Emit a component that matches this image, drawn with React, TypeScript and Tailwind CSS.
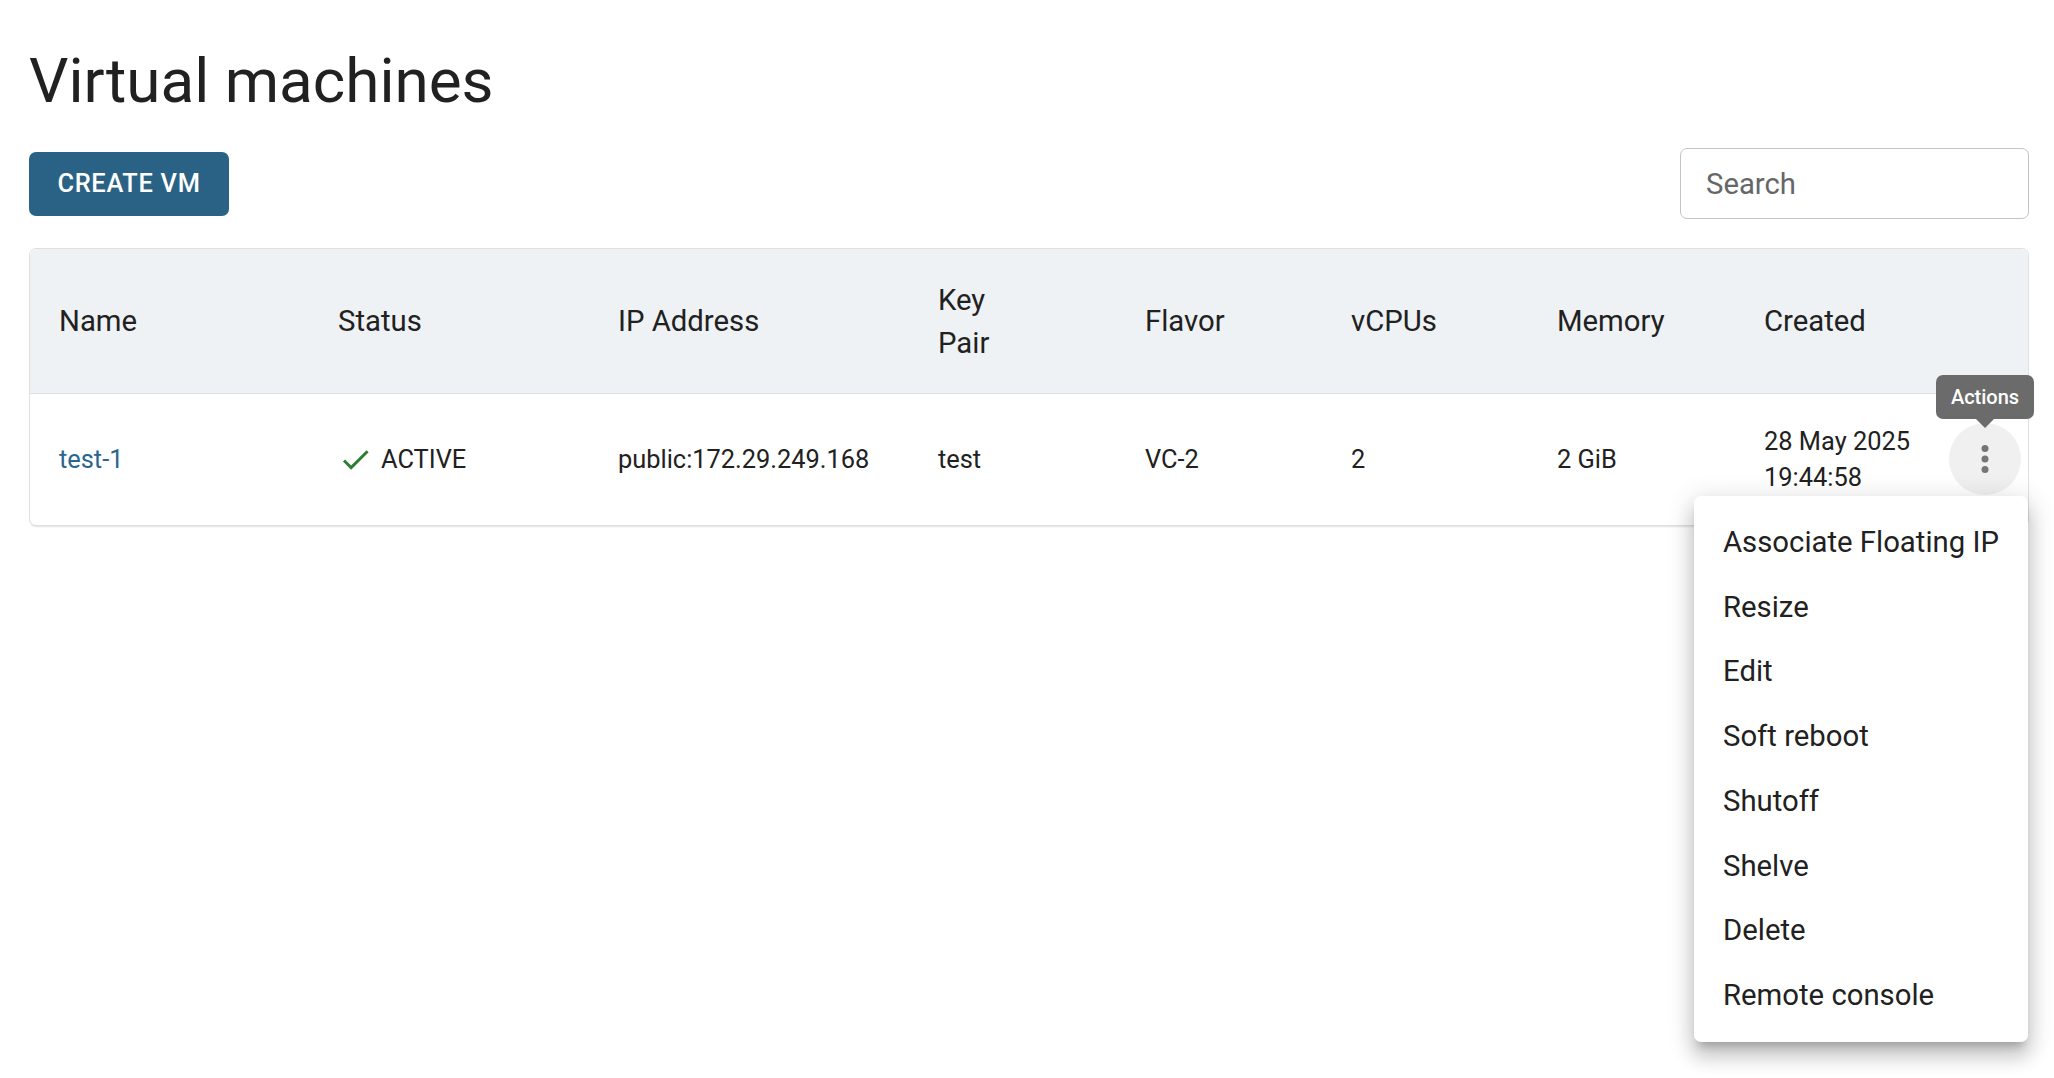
import React from "react";

const headers = ["Name", "Status", "IP Address", "Key Pair", "Flavor", "vCPUs", "Memory", "Created"];
const menuItems = [
  "Associate Floating IP",
  "Resize",
  "Edit",
  "Soft reboot",
  "Shutoff",
  "Shelve",
  "Delete",
  "Remote console",
];

const gridCols =
  "grid grid-cols-[279px_280px_320px_207px_206px_206px_207px_206px_87px]";

export default function App() {
  return (
    <div className="min-h-screen bg-white pl-[29px] pr-[25px] pt-[42px] font-['Roboto',sans-serif] text-[#212121]">
      <h1 className="text-[62px] leading-[77px] font-normal">Virtual machines</h1>

      <div className="mt-[29px] flex h-[71px] items-center justify-between">
        <button className="ml-0 flex h-[64px] w-[200px] items-center justify-center rounded-[7px] bg-[#2a6286] text-[25.4px] font-medium uppercase tracking-[0.7px] text-white">
          Create VM
        </button>
        <div className="flex h-[71px] w-[349px] items-center rounded-[7px] border border-[#c4c4c4] pl-[25px] pt-[2px]">
          <input
            placeholder="Search"
            className="w-full bg-transparent text-[29.3px] outline-none placeholder:text-[#666666]"
          />
        </div>
      </div>

      <div className="mt-[29px] rounded-[7px] border border-[#e0e0e0] bg-white shadow-[0_2px_2px_-1px_rgba(0,0,0,0.12)]">
        <div className={`${gridCols} rounded-t-[7px] border-b border-[#e0e0e0] bg-[#eef2f5]`}>
          {headers.map((h) => (
            <div key={h} className="flex items-center px-[29px] pt-[29.5px] pb-[27px] text-[29.3px] leading-[43.5px]">
              {h === "Key Pair" ? <span className="w-[80px]">Key Pair</span> : h}
            </div>
          ))}
          <div />
        </div>

        <div className={`${gridCols} text-[25.4px] leading-[36.5px]`}>
          <div className="flex items-center px-[29px] py-[29px]">
            <a className="text-[#2a6590]">test-1</a>
          </div>
          <div className="flex items-center gap-[8px] px-[29px] py-[29px]">
            <svg viewBox="0 0 24 24" className="h-[35px] w-[35px] shrink-0" fill="#2e7d32">
              <path d="M9 16.17 4.83 12l-1.42 1.41L9 19 21 7l-1.41-1.41z" />
            </svg>
            <span>ACTIVE</span>
          </div>
          <div className="flex items-center px-[29px] py-[29px]">public:172.29.249.168</div>
          <div className="flex items-center px-[29px] py-[29px]">test</div>
          <div className="flex items-center px-[29px] py-[29px]">VC-2</div>
          <div className="flex items-center px-[29px] py-[29px]">2</div>
          <div className="flex items-center px-[29px] py-[29px]">2 GiB</div>
          <div className="flex items-center pl-[29px] py-[29px]">28 May 2025 19:44:58</div>
          <div className="relative flex items-center justify-center">
            <div className="flex h-[72px] w-[72px] items-center justify-center rounded-full bg-[#f0f0f0]">
              <svg viewBox="0 0 24 24" className="h-[42px] w-[42px]" fill="#757575">
                <circle cx="12" cy="6" r="2" />
                <circle cx="12" cy="12" r="2" />
                <circle cx="12" cy="18" r="2" />
              </svg>
            </div>

            <div className="absolute left-[-5px] top-[-19px] z-20 flex h-[44px] w-[98px] items-center justify-center rounded-[7px] bg-[#6b6b6b] text-[20px] font-medium leading-none text-white">
              Actions
              <div className="absolute left-1/2 top-full h-0 w-0 -translate-x-1/2 border-x-[9px] border-t-[9px] border-x-transparent border-t-[#6b6b6b]" />
            </div>

            <div className="absolute left-[-247px] top-[102px] z-30 w-[334px] rounded-[7px] bg-white py-[14.5px] shadow-[0_9px_9px_-5px_rgba(0,0,0,0.2),0_15px_18px_2px_rgba(0,0,0,0.14),0_5px_26px_4px_rgba(0,0,0,0.12)]">
              {menuItems.map((m) => (
                <div key={m} className="flex h-[64.7px] items-center px-[29px] text-[29.3px] text-[#212121]">
                  {m}
                </div>
              ))}
            </div>
          </div>
        </div>
      </div>
    </div>
  );
}
